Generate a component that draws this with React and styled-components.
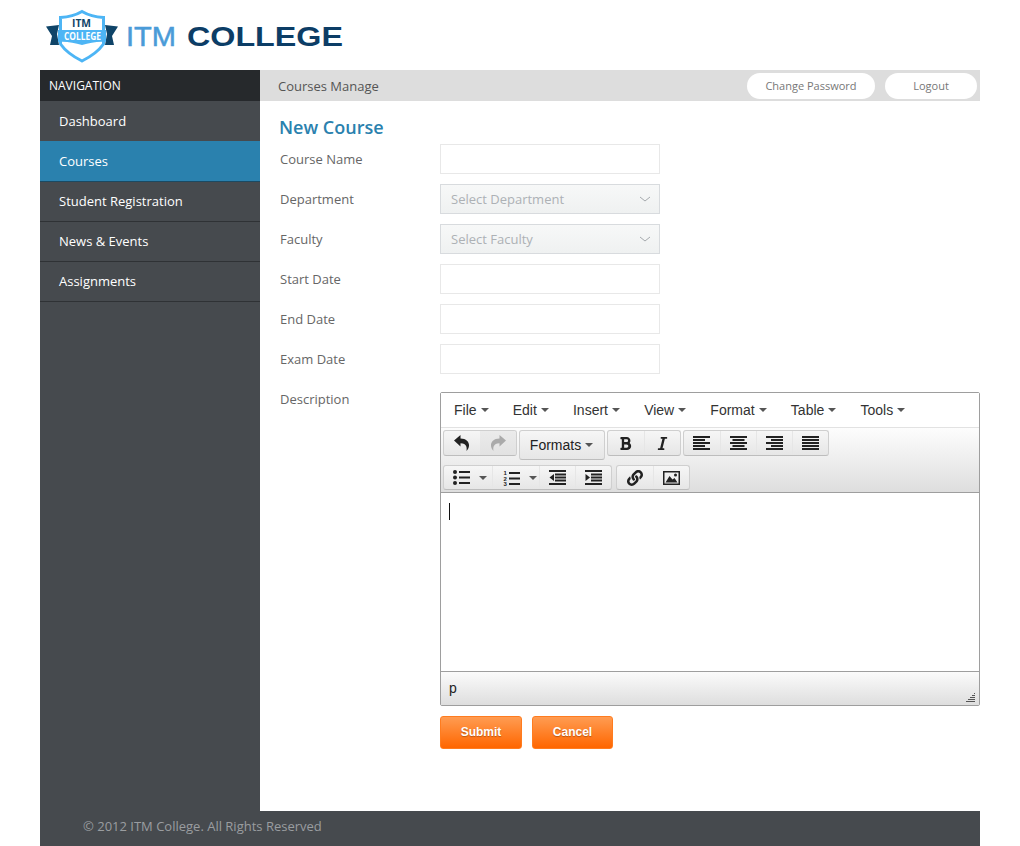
import React from 'react'
import styled, { createGlobalStyle } from 'styled-components'
import { FaBold, FaItalic, FaLink } from 'react-icons/fa'

const GlobalStyle = createGlobalStyle`
  html, body {
    margin: 0;
    padding: 0;
    background: #fff;
    font-family: "Open Sans", "Liberation Sans", sans-serif;
    font-size: 13px;
    color: #555;
  }
  * { box-sizing: border-box; }
`

const Page = styled.div`
  width: 940px;
  margin: 0 40px;
`
const Header = styled.div`
  height: 70px;
  padding-left: 5px;
  display: flex;
  align-items: flex-start;
`
const Body = styled.div`
  display: flex;
  height: 741px;
`
const Sidebar = styled.div`
  width: 220px;
  background: #464a4e;
`
const NavTitle = styled.div`
  height: 31px;
  line-height: 31px;
  padding-left: 9px;
  background: #26292c;
  color: #fff;
  font-size: 12px;
`
const NavItem = styled.div`
  height: ${p => (p.$active ? 41 : 40)}px;
  line-height: ${p => (p.$after ? 38 : 40)}px;
  padding-left: 19px;
  color: #fff;
  font-size: 13px;
  background: ${p => (p.$active ? '#2a81ae' : '#464a4e')};
  border-bottom: 1px solid ${p => (p.$active ? '#1b4a63' : p.$plain ? '#464a4e' : '#2f3235')};
`
const Main = styled.div`
  flex: 1;
  min-width: 0;
`
const TopBar = styled.div`
  height: 31px;
  background: #ddd;
  padding: 3px 3px 2px 18px;
  display: flex;
  align-items: center;
  gap: 10px;
`
const TopTitle = styled.div`
  flex: 1;
  font-size: 13px;
  color: #555;
`
const PillButton = styled.div`
  width: ${p => p.$w}px;
  height: 26px;
  line-height: 25px;
  border-radius: 13px;
  background: #fff;
  text-align: center;
  font-size: 11px;
  color: #777;
`
const Content = styled.div`
  padding: 16px 0 0 20px;
`
const Heading = styled.h2`
  margin: 0;
  font-size: 18px;
  line-height: 20px;
  font-weight: 600;
  color: #2a81ae;
  margin-left: -1px;
  height: 27px;
`
const Row = styled.div`
  display: flex;
  align-items: flex-start;
  margin-bottom: 10px;
`
const Label = styled.div`
  width: 160px;
  line-height: 30px;
  font-size: 13px;
  color: #666;
`
const Input = styled.div`
  width: 220px;
  height: 30px;
  background: #fff;
  border: 1px solid #e8e8e8;
`
const Select = styled.div`
  width: 220px;
  height: 30px;
  padding: 0 8px 0 10px;
  display: flex;
  align-items: center;
  justify-content: space-between;
  background: linear-gradient(#f7f8f8, #eff1f1);
  border: 1px solid #d8dbde;
  color: #adb1b5;
  font-size: 13px;
`
const Editor = styled.div`
  width: 540px;
  height: 314px;
  margin-top: 8px;
  border: 1px solid #9e9e9e;
  border-radius: 2px;
  display: flex;
  flex-direction: column;
  font-family: "Liberation Sans", Arial, sans-serif;
  color: #333;
`
const MenuBar = styled.div`
  height: 35px;
  display: flex;
  align-items: center;
  padding-left: 13px;
  gap: 24.15px;
  background: #fff;
  border-bottom: 1px solid #e2e2e2;
  font-size: 14px;
`
const MenuItem = styled.div`
  display: flex;
  align-items: center;
  gap: 4px;
`
const Caret = styled.span`
  display: inline-block;
  width: 0;
  height: 0;
  border-left: 4px solid transparent;
  border-right: 4px solid transparent;
  border-top: 4px solid #555;
`
const Toolbars = styled.div`
  height: 65px;
  padding: 2px 2px 0 2px;
  background: linear-gradient(#fdfdfd, #dedede);
  border-bottom: 1px solid #9e9e9e;
`
const ToolRow = styled.div`
  display: flex;
  align-items: flex-start;
  gap: ${p => p.$gap || 2}px;
  height: ${p => p.$h}px;
`
const Group = styled.div`
  display: flex;
  height: ${p => p.$h || 26}px;
  border-radius: 3px;
  border: 1px solid #cfcfcf;
  border-bottom-color: #bdbdbd;
  background: linear-gradient(#f6f6f6, #e6e6e6);
  overflow: hidden;
`
const Tool = styled.div`
  width: ${p => p.$w || 36}px;
  padding-right: 1px;
  display: flex;
  align-items: center;
  justify-content: center;
  gap: 4px;
  color: #222;
  font-size: 14px;
  background: ${p => (p.$pressed ? 'linear-gradient(#ebebeb, #e2e2e2)' : 'none')};
  border-left: ${p => (p.$first ? '0' : '1px solid #e6e6e6')};
`
const ListTool = styled(Tool)`
  justify-content: flex-start;
  gap: 9px;
  padding-left: ${p => p.$pad}px;
`
const Area = styled.div`
  flex: 1;
  background: #fff;
  padding: 10px 8px;
  border-bottom: 1px solid #9e9e9e;
`
const TextCursor = styled.div`
  width: 1px;
  height: 17px;
  background: #111;
`
const StatusBar = styled.div`
  height: 33px;
  display: flex;
  align-items: center;
  justify-content: space-between;
  padding: 0 3px 2px 8px;
  background: linear-gradient(#fbfbfb, #dedede);
  font-size: 14px;
  color: #222;
`
const Grip = styled.svg`
  align-self: flex-end;
  margin-bottom: 1px;
`
const Actions = styled.div`
  display: flex;
  gap: 10px;
  margin: 10px 0 0 160px;
`
const OrangeButton = styled.div`
  width: ${p => p.$w}px;
  height: 33px;
  line-height: 30px;
  text-align: center;
  border-radius: 3px;
  border: 1px solid #ff7c1f;
  background: linear-gradient(#ff9c52, #ff6600);
  color: #fff;
  font-family: "Liberation Sans", Arial, sans-serif;
  font-weight: 700;
  font-size: 12px;
  text-shadow: 0 1px 1px rgba(120, 50, 0, 0.5);
`
const Footer = styled.div`
  height: 35px;
  line-height: 31px;
  padding-left: 43px;
  background: #464a4e;
  color: #9a9da0;
  font-size: 13px;
`

function Logo() {
  return (
    <svg width="305" height="66" viewBox="45 0 305 66">
      {/* ribbon ends */}
      <path d="M46 26.5 L59 25 L57 34 L59 45 L50 45 L52 36 Z" fill="#0f4468" />
      <path d="M118 26.5 L105 25 L107 34 L105 45 L114 45 L112 36 Z" fill="#0f4468" />
      {/* shield */}
      <path d="M82 11.5 C88 15 95 17 103.5 17.5 L103.5 44 C98 52 90 57 82 61 C74 57 66 52 60.5 44 L60.5 17.5 C69 17 76 15 82 11.5 Z" fill="#fff" stroke="#4db5f5" strokeWidth="3" />
      <path d="M58 30 H106 V42 C98 41 90 43 82 45 C74 43 66 41 58 42 Z" fill="#4db5f5" />
      <text x="72" y="27" fontFamily="Open Sans" fontWeight="700" fontSize="10" fill="#0f4468" textLength="19" lengthAdjust="spacingAndGlyphs">ITM</text>
      <text x="64" y="40" fontFamily="Open Sans" fontWeight="700" fontSize="10" fill="#fff" textLength="37" lengthAdjust="spacingAndGlyphs">COLLEGE</text>
      <text x="126" y="46" fontFamily="Liberation Sans" fontSize="27" fill="#4a9bd8" stroke="#4a9bd8" strokeWidth="0.5" textLength="50" lengthAdjust="spacingAndGlyphs">ITM</text>
      <text x="187" y="46" fontFamily="Liberation Sans" fontWeight="700" fontSize="27" fill="#0c3d66" textLength="156" lengthAdjust="spacingAndGlyphs">COLLEGE</text>
    </svg>
  )
}

function Chevron() {
  return (
    <svg width="12" height="6" viewBox="0 0 12 6">
      <path d="M1 1 L6 5 L11 1" fill="none" stroke="#a5a9ad" strokeWidth="1" />
    </svg>
  )
}

function Arrow({ flip, color }) {
  return (
    <svg width="16" height="16" viewBox="0 0 16 16" fill={color}>
      <path
        transform={flip ? 'translate(16 0) scale(-1 1)' : undefined}
        d="M0 5.5 L6.5 0 V3.5 C12 3.5 15.5 7 15 11 C14.8 13 13.5 15 12.5 16 C13 13 13 8.5 6.5 8.3 V11.5 Z"
      />
    </svg>
  )
}

// lines for the align buttons: [x, y, w]
function Lines({ rows }) {
  return (
    <svg width="17" height="14" viewBox="0 0 17 14" fill="#222">
      {rows.map(([x, y, w], i) => (
        <rect key={i} x={x} y={y} width={w} height="2" />
      ))}
    </svg>
  )
}

const alignLeft = [[0, 0, 17], [0, 3, 12], [0, 6, 17], [0, 9, 12], [0, 12, 17]]
const alignCenter = [[0, 0, 17], [2.5, 3, 12], [0, 6, 17], [2.5, 9, 12], [0, 12, 17]]
const alignRight = [[0, 0, 17], [5, 3, 12], [0, 6, 17], [5, 9, 12], [0, 12, 17]]
const alignFull = [[0, 0, 17], [0, 3, 17], [0, 6, 17], [0, 9, 17], [0, 12, 17]]

function Bullets() {
  return (
    <svg width="17" height="15" viewBox="0 0 17 15" fill="#222">
      <circle cx="2" cy="2" r="2" />
      <circle cx="2" cy="7.5" r="2" />
      <circle cx="2" cy="13" r="2" />
      <rect x="6" y="1" width="11" height="2" />
      <rect x="6" y="6.5" width="11" height="2" />
      <rect x="6" y="12" width="11" height="2" />
    </svg>
  )
}

function Numbers() {
  return (
    <svg width="17" height="16" viewBox="0 0 17 16" fill="#222">
      <text x="0.5" y="5" fontFamily="Liberation Sans" fontWeight="700" fontSize="6">1</text>
      <text x="0.5" y="10.5" fontFamily="Liberation Sans" fontWeight="700" fontSize="6">2</text>
      <text x="0.5" y="16" fontFamily="Liberation Sans" fontWeight="700" fontSize="6">3</text>
      <rect x="6" y="2" width="11" height="2" />
      <rect x="6" y="7.5" width="11" height="2" />
      <rect x="6" y="13" width="11" height="2" />
    </svg>
  )
}

function Indent({ out }) {
  return (
    <svg width="17" height="15" viewBox="0 0 17 15" fill="#222">
      <rect x="0" y="0" width="17" height="2" />
      <rect x="6" y="3.5" width="11" height="2" />
      <rect x="6" y="6.5" width="11" height="2" />
      <rect x="6" y="9.5" width="11" height="2" />
      <rect x="0" y="13" width="17" height="2" />
      <path d={out ? 'M5 4 L0.5 7.5 L5 11 Z' : 'M0.5 4 L5 7.5 L0.5 11 Z'} />
    </svg>
  )
}

function ImageIcon() {
  return (
    <svg width="17" height="14" viewBox="0 0 17 14">
      <path fillRule="evenodd" d="M0 0 H17 V14 H0 Z M1.5 1.5 V12.5 H15.5 V1.5 Z" fill="#222" />
      <path d="M2.5 11.5 L6.5 5 L9.5 8.5 L11.5 7 L14.5 11.5 Z" fill="#222" />
      <circle cx="12.5" cy="4" r="1.5" fill="#222" />
    </svg>
  )
}

const fields = [
  ['Course Name'],
  ['Department', 'Select Department'],
  ['Faculty', 'Select Faculty'],
  ['Start Date'],
  ['End Date'],
  ['Exam Date'],
]

export default function App() {
  return (
    <Page>
      <GlobalStyle />
      <Header>
        <Logo />
      </Header>
      <Body>
        <Sidebar>
          <NavTitle>NAVIGATION</NavTitle>
          <NavItem $plain>Dashboard</NavItem>
          <NavItem $active>Courses</NavItem>
          <NavItem $after>Student Registration</NavItem>
          <NavItem $after>News &amp; Events</NavItem>
          <NavItem $after>Assignments</NavItem>
        </Sidebar>
        <Main>
          <TopBar>
            <TopTitle>Courses Manage</TopTitle>
            <PillButton $w={128}>Change Password</PillButton>
            <PillButton $w={92}>Logout</PillButton>
          </TopBar>
          <Content>
            <Heading>New Course</Heading>
            {fields.map(([label, placeholder]) => (
              <Row key={label}>
                <Label>{label}</Label>
                {placeholder ? (
                  <Select>
                    {placeholder}
                    <Chevron />
                  </Select>
                ) : (
                  <Input />
                )}
              </Row>
            ))}
            <Row>
              <Label>Description</Label>
              <Editor>
                <MenuBar>
                  {['File', 'Edit', 'Insert', 'View', 'Format', 'Table', 'Tools'].map(m => (
                    <MenuItem key={m}>
                      {m}
                      <Caret />
                    </MenuItem>
                  ))}
                </MenuBar>
                <Toolbars>
                  <ToolRow $h={35}>
                    <Group>
                      <Tool $first><Arrow color="#222" /></Tool>
                      <Tool $first $pressed><Arrow flip color="#aaa" /></Tool>
                    </Group>
                    <Group $h={30}>
                      <Tool $first $w={84}>Formats<Caret /></Tool>
                    </Group>
                    <Group>
                      <Tool $first><FaBold size={15} /></Tool>
                      <Tool><FaItalic size={15} /></Tool>
                    </Group>
                    <Group>
                      <Tool $first><Lines rows={alignLeft} /></Tool>
                      <Tool><Lines rows={alignCenter} /></Tool>
                      <Tool><Lines rows={alignRight} /></Tool>
                      <Tool><Lines rows={alignFull} /></Tool>
                    </Group>
                  </ToolRow>
                  <ToolRow $h={26} $gap={4}>
                    <Group $h={25}>
                      <ListTool $first $w={48} $pad={9}><Bullets /><Caret /></ListTool>
                      <ListTool $w={47} $pad={10}><Numbers /><Caret /></ListTool>
                      <Tool><Indent out /></Tool>
                      <Tool><Indent /></Tool>
                    </Group>
                    <Group $h={25}>
                      <Tool $first><FaLink size={16} /></Tool>
                      <Tool><ImageIcon /></Tool>
                    </Group>
                  </ToolRow>
                </Toolbars>
                <Area>
                  <TextCursor />
                </Area>
                <StatusBar>
                  p
                  <Grip width="10" height="10" viewBox="0 0 10 10" fill="#555">
                    <rect x="8" y="1" width="1" height="1" />
                    <rect x="6" y="3" width="3" height="1" />
                    <rect x="4" y="5" width="5" height="1" />
                    <rect x="2" y="7" width="7" height="1" />
                    <rect x="0" y="9" width="9" height="1" />
                  </Grip>
                </StatusBar>
              </Editor>
            </Row>
            <Actions>
              <OrangeButton $w={82}>Submit</OrangeButton>
              <OrangeButton $w={81}>Cancel</OrangeButton>
            </Actions>
          </Content>
        </Main>
      </Body>
      <Footer>© 2012 ITM College. All Rights Reserved</Footer>
    </Page>
  )
}
